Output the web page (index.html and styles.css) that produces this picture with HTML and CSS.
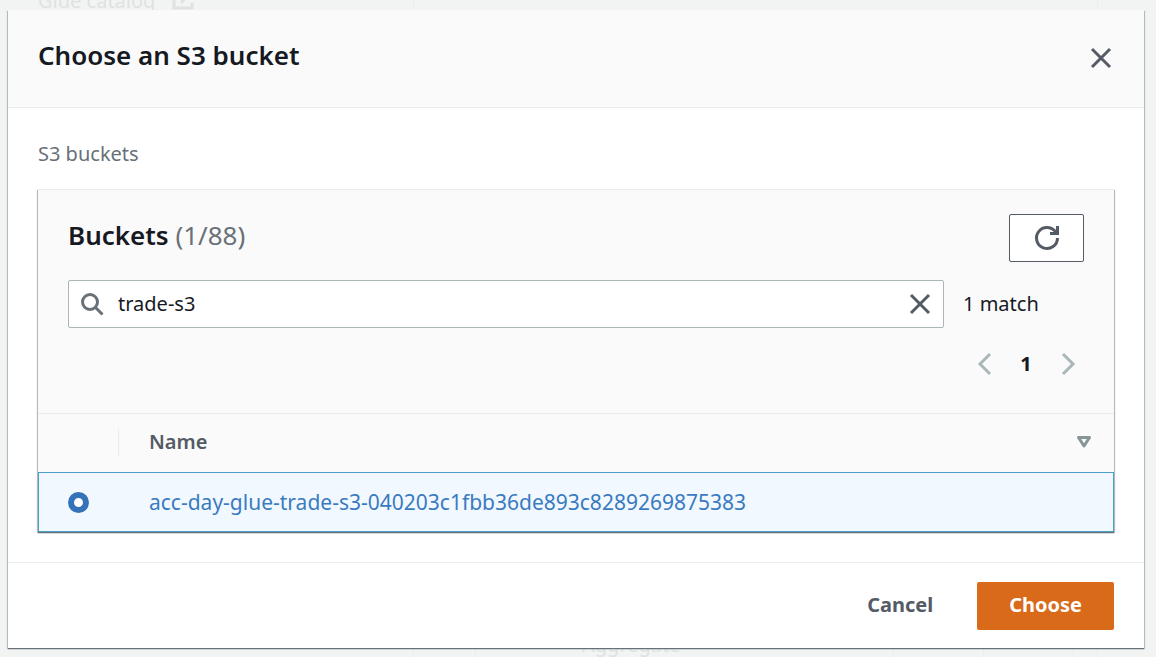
FILE: index.html
```
<!DOCTYPE html>
<html lang="en">
<head>
<meta charset="utf-8">
<title>Choose an S3 bucket</title>
<meta name="viewport" content="width=device-width, initial-scale=1">
<link rel="stylesheet" href="styles.css">
</head>
<body>
<div class="backdrop" aria-hidden="true">
  <div class="backdrop-nav">
    <span>Glue catalog</span>
    <svg width="24" height="24" viewBox="0 0 24 24"><path d="M8 3H3v18h18v-5M14 3h7v7M21 3 10 16"/></svg>
  </div>
  <div class="backdrop-canvas">
    <div class="backdrop-column"></div>
    <div class="backdrop-node">Aggregate</div>
    <div class="backdrop-column wide"></div>
    <div class="backdrop-column wide"></div>
  </div>
</div>
<section class="dialog" role="dialog" aria-labelledby="dialog-title">
  <header class="dialog-header">
    <h1 class="title" id="dialog-title">Choose an S3 bucket</h1>
    <button class="icon-button" type="button" aria-label="Close">
      <svg width="24" height="24" viewBox="0 0 24 24"><path class="stroke" d="m3 3 18 18M21 3 3 21"/></svg>
    </button>
  </header>
  <div class="dialog-body">
    <p class="label">S3 buckets</p>
    <div class="panel">
      <div class="panel-header">
        <div class="row heading-row">
          <h2 class="title">Buckets <span class="count">(1/88)</span></h2>
          <button class="refresh" type="button" aria-label="Refresh">
            <svg width="28" height="28" viewBox="0 0 28 28"><path class="stroke" d="M24.500 14a10.500 10.500 0 1 1-1.500-5.400"/><path class="refresh-tip" d="M23 2h3v9h-9V8h6z"/></svg>
          </button>
        </div>
        <div class="row">
          <div class="search">
            <svg width="24" height="24" viewBox="0 0 24 24"><circle cx="10" cy="10" r="7.500"/><path d="m15.500 15.500 7 7"/></svg>
            <input type="text" value="trade-s3" aria-label="Find buckets">
            <button class="icon-button" type="button" aria-label="Clear">
              <svg width="24" height="24" viewBox="0 0 24 24"><path class="stroke" d="m3 3 18 18M21 3 3 21"/></svg>
            </button>
          </div>
          <span class="matches">1 match</span>
        </div>
        <nav class="pagination" aria-label="Pages">
          <button class="icon-button" type="button" aria-label="Previous page" disabled>
            <svg width="24" height="24" viewBox="0 0 24 24"><path class="stroke" d="M18 2 8 12l10 10"/></svg>
          </button>
          <button class="page-number" type="button" aria-current="page">1</button>
          <button class="icon-button" type="button" aria-label="Next page" disabled>
            <svg width="24" height="24" viewBox="0 0 24 24"><path class="stroke" d="m7 2 10 10L7 22"/></svg>
          </button>
        </nav>
      </div>
      <table class="buckets">
        <thead>
          <tr>
            <th class="select-cell" aria-label="Selection"></th>
            <th>
              <div class="sort-header">
                <span>Name</span>
                <svg width="16" height="14" viewBox="0 0 16 14"><path d="M2.500 2.500h11L8 11z"/></svg>
              </div>
            </th>
          </tr>
        </thead>
        <tbody>
          <tr>
            <td class="select-cell"><input type="radio" name="bucket" aria-label="Select acc-day-glue-trade-s3-040203c1fbb36de893c8289269875383" checked></td>
            <td><a href="#">acc-day-glue-trade-s3-040203c1fbb36de893c8289269875383</a></td>
          </tr>
        </tbody>
      </table>
    </div>
  </div>
  <footer class="dialog-footer">
    <button class="action" type="button">Cancel</button>
    <button class="action primary" type="button">Choose</button>
  </footer>
</section>
</body>
</html>
```

FILE: styles.css
```
* {
  box-sizing: border-box;
}

body {
  position: relative;
  min-height: 100vh;
  margin: 0;
  padding: 10px 12px 8px 8px;
  background: #f2f4f4;
  color: #16191f;
  font: 20px/28px "Noto Sans", "Open Sans", sans-serif;
}

button,
input {
  margin: 0;
  font: inherit;
  color: inherit;
}

button {
  padding: 0;
  border: 0;
  background: none;
  cursor: pointer;
}

svg {
  display: block;
  flex: none;
  fill: none;
}

.stroke {
  stroke: currentColor;
  stroke-width: 3;
}

/* Page dimmed behind the dialog */
.backdrop {
  position: absolute;
  inset: 0;
  display: flex;
  overflow: hidden;
  color: #dfe2e2;
}

.backdrop-nav {
  display: flex;
  gap: 16px;
  width: 413px;
  height: 24px;
  margin-top: -13px;
  padding-left: 38px;
  line-height: 28px;
}

.backdrop-nav svg {
  stroke: currentColor;
  stroke-width: 3;
}

.backdrop-canvas {
  display: flex;
  flex: 1;
  align-items: flex-end;
  margin-right: 58px;
  border: solid #eaeded;
  border-width: 0 1px;
}

.backdrop-column {
  width: 62px;
  height: 9px;
  border-right: 1px solid #eaeded;
}

.backdrop-column.wide {
  width: 90px;
}

.backdrop-node {
  width: 418px;
  height: 26px;
  padding-left: 106px;
  border-right: 1px solid #eaeded;
  line-height: 28px;
}

.dialog {
  position: relative;
  display: flex;
  flex-direction: column;
  background: #fff;
  box-shadow: 0 1px 1px 0 #687078, 1px 1px 1px 0 #c4c9c9, -1px 1px 1px 0 #c4c9c9;
}

.dialog-header {
  display: flex;
  align-items: flex-start;
  justify-content: space-between;
  padding: 27px 30px 34px;
  background: #fafafa;
  border-bottom: 1px solid #eaeded;
}

.title {
  margin: 0;
  font-size: 26px;
  font-weight: 600;
  line-height: 36px;
}

.icon-button {
  color: #545b64;
}

.dialog-header .icon-button {
  padding: 9px 1px 0;
}

.dialog-body {
  padding: 32px 30px 30px;
}

.label {
  margin: 0 0 21px;
  color: #687078;
}

.panel {
  background: #fafafa;
  border-top: 1px solid #eaeded;
  box-shadow: 0 1px 1px 0 #687078, 1px 1px 1px 0 #c4c9c9, -1px 1px 1px 0 #c4c9c9;
}

.panel-header {
  display: flex;
  flex-direction: column;
  padding: 24px 30px 35px;
}

.row {
  display: flex;
  align-items: center;
}

.heading-row {
  align-items: flex-start;
  justify-content: space-between;
  margin-bottom: 18px;
}

.heading-row .title {
  padding-top: 3px;
}

.count {
  color: #687078;
  font-weight: 400;
}

.refresh {
  display: grid;
  place-items: center;
  width: 75px;
  height: 48px;
  border: 1px solid #545b64;
  border-radius: 2px;
  background: #fff;
  color: #545b64;
}

.refresh-tip {
  fill: currentColor;
}

.search {
  display: flex;
  flex: 1;
  align-items: center;
  gap: 14px;
  height: 48px;
  padding: 0 11px;
  border: 1px solid #aab7b8;
  border-radius: 2px;
  background: #fff;
}

.search > svg {
  stroke: #687078;
  stroke-width: 3;
}

.search input {
  flex: 1;
  min-width: 0;
  padding: 0;
  border: 0;
  outline: 0;
  background: none;
}

.matches {
  width: 140px;
  padding-left: 19px;
}

.pagination {
  display: flex;
  align-self: flex-end;
  align-items: center;
  gap: 24px;
  margin-top: 22px;
  padding-right: 4px;
}

.pagination .icon-button {
  color: #aab7b8;
}

.page-number {
  width: 12px;
  font-weight: 700;
}

.buckets {
  width: 100%;
  border-collapse: separate;
  border-spacing: 0;
}

.buckets th,
.buckets td {
  padding: 0 22px 0 31px;
  text-align: left;
}

.buckets th {
  height: 59px;
  border-top: 1px solid #eaeded;
  color: #545b64;
  font-weight: 600;
}

.buckets .select-cell {
  width: 80px;
  padding: 0 0 0 29px;
}

.buckets th + th {
  padding: 0 22px 2px 0;
}

.sort-header {
  display: flex;
  align-items: center;
  justify-content: space-between;
  padding-left: 30px;
  border-left: 1px solid #eaeded;
}

.sort-header svg {
  stroke: #879596;
  stroke-width: 3;
  stroke-linejoin: round;
}

.buckets td {
  height: 60px;
  background: #f1f8ff;
  border: solid #4a9fca;
  border-width: 1px 1px 1px 0;
}

.buckets td.select-cell {
  border-width: 1px 0 1px 1px;
}

.buckets a {
  color: #3a7bbf;
  font-size: 21px;
  text-decoration: none;
}

.buckets input {
  display: block;
  width: 21px;
  height: 21px;
  border: 6px solid #3573b9;
  border-radius: 50%;
  background: #fff;
  appearance: none;
}

.dialog-footer {
  display: flex;
  justify-content: flex-end;
  gap: 12px;
  padding: 19px 30px 18px;
  border-top: 1px solid #eaeded;
}

.action {
  height: 48px;
  padding: 0 32px 2px;
  border-radius: 2px;
  color: #545b64;
  font-weight: 700;
}

.primary {
  background: #d86a1a;
  color: #fff;
}
```
